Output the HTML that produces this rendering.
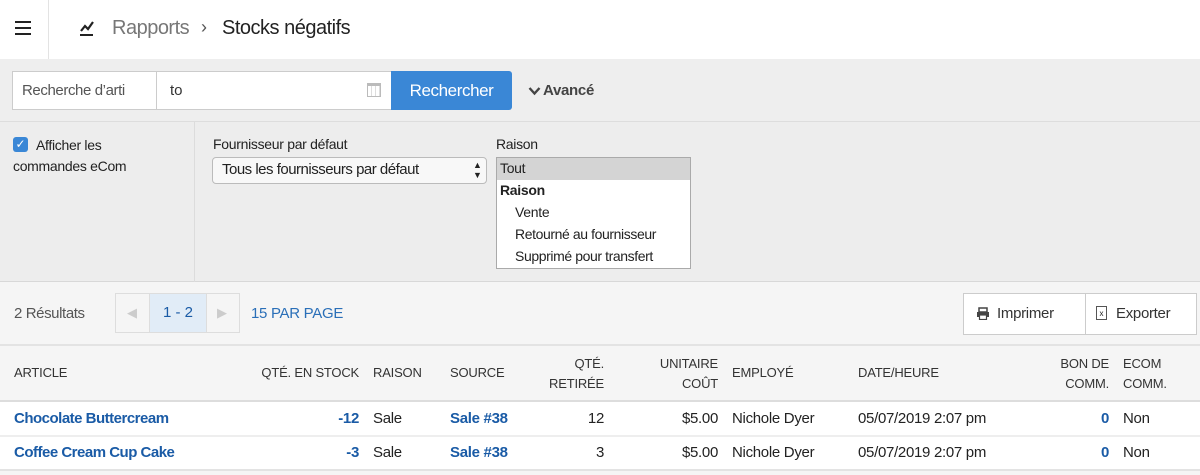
<!DOCTYPE html>
<html><head><meta charset="utf-8"><style>
*{box-sizing:border-box;margin:0;padding:0}
body{width:1200px;height:475px;position:relative;overflow:hidden;background:#f5f5f5;font-family:"Liberation Sans",sans-serif;color:#222}
.a{position:absolute;white-space:nowrap}
.lnk{color:#1a5ba6}
.th{font-size:13px;color:#333;letter-spacing:-0.2px}
.td{font-size:15px;letter-spacing:-0.3px}
.r{text-align:right}
</style></head><body>
<div class="a" style="left:0;top:0;width:1200px;height:59px;background:#fff;box-shadow:0 2px 3px rgba(0,0,0,.15)"></div>
<div class="a" style="left:48px;top:0;width:1px;height:59px;background:#e3e3e3"></div>
<div class="a" style="left:15px;top:21px;width:16px;height:2px;background:#222;box-shadow:0 6px 0 #222,0 12px 0 #222"></div>
<svg class="a" style="left:79px;top:19px" width="18" height="18" viewBox="0 0 18 18"><path d="M2 12 L6 7 L9 10 L14 3" stroke="#222" stroke-width="2.2" fill="none"/><rect x="1" y="15" width="13" height="2" fill="#222"/></svg>
<div class="a" style="left:112px;top:17px;font-size:20px;color:#777;letter-spacing:-0.5px">Rapports</div>
<div class="a" style="left:201px;top:17px;font-size:18px;color:#555">›</div>
<div class="a" style="left:222px;top:17px;font-size:20px;color:#222;letter-spacing:-0.5px">Stocks négatifs</div>
<div class="a" style="left:0;top:59px;width:1200px;height:63px;background:#eee;border-bottom:1px solid #ddd"></div>
<div class="a" style="left:12px;top:71px;width:380px;height:39px;background:#fff;border:1px solid #ccc"></div>
<div class="a" style="left:156px;top:71px;width:1px;height:39px;background:#ccc"></div>
<div class="a" style="left:22px;top:82px;font-size:15px;color:#555;letter-spacing:-0.4px;width:126px;overflow:hidden">Recherche d’arti</div>
<div class="a" style="left:170px;top:82px;font-size:15px;color:#333">to</div>
<div class="a" style="left:367px;top:83px;width:14px;height:14px;border:1px solid #bbb;border-top:3px solid #bbb;background:repeating-linear-gradient(90deg,#fff 0 3px,#ddd 3px 4px)"></div>
<div class="a" style="left:391px;top:71px;width:121px;height:39px;background:#3a87d6;border-radius:0 3px 3px 0;color:#fff;font-size:17px;text-align:center;line-height:39px;letter-spacing:-0.4px">Rechercher</div>
<svg class="a" style="left:528px;top:86px" width="13" height="10" viewBox="0 0 13 10"><path d="M1.5 2 L6.5 7.5 L11.5 2" stroke="#444" stroke-width="2.4" fill="none"/></svg>
<div class="a" style="left:543px;top:82px;font-size:15px;font-weight:bold;color:#444;letter-spacing:-0.3px">Avancé</div>
<div class="a" style="left:0;top:122px;width:1200px;height:160px;background:#ededed;border-bottom:1px solid #d8d8d8"></div>
<div class="a" style="left:194px;top:122px;width:1px;height:160px;background:#dcdcdc"></div>
<div class="a" style="left:13px;top:137px;width:15px;height:15px;background:#3a87d6;border-radius:3px;color:#fff;font-size:12px;line-height:15px;text-align:center">✓</div>
<div class="a" style="left:36px;top:137px;font-size:14px;letter-spacing:-0.3px">Afficher les</div>
<div class="a" style="left:13px;top:158px;font-size:14px;letter-spacing:-0.3px">commandes eCom</div>
<div class="a" style="left:213px;top:136px;font-size:14px;letter-spacing:-0.3px">Fournisseur par défaut</div>
<div class="a" style="left:212px;top:157px;width:275px;height:27px;background:#f8f8f8;border:1px solid #bbb;border-radius:4px"></div>
<div class="a" style="left:222px;top:161px;font-size:15px;letter-spacing:-0.5px">Tous les fournisseurs par défaut</div>
<div class="a" style="left:473px;top:160px;font-size:9px;line-height:10px">▲<br>▼</div>
<div class="a" style="left:496px;top:136px;font-size:14px;letter-spacing:-0.3px">Raison</div>
<div class="a" style="left:496px;top:157px;width:195px;height:112px;background:#fff;border:1px solid #aaa"></div>
<div class="a" style="left:497px;top:158px;width:193px;height:22px;background:#d4d4d4"></div>
<div class="a" style="left:500px;top:160px;font-size:14px;letter-spacing:-0.3px">Tout</div>
<div class="a" style="left:500px;top:182px;font-size:14px;font-weight:bold;letter-spacing:-0.3px">Raison</div>
<div class="a" style="left:515px;top:204px;font-size:14px;letter-spacing:-0.3px">Vente</div>
<div class="a" style="left:515px;top:226px;font-size:14px;letter-spacing:-0.4px">Retourné au fournisseur</div>
<div class="a" style="left:515px;top:248px;font-size:14px;letter-spacing:-0.4px">Supprimé pour transfert</div>
<div class="a" style="left:14px;top:305px;font-size:15px;color:#555;letter-spacing:-0.4px">2 Résultats</div>
<div class="a" style="left:115px;top:293px;width:125px;height:40px;border:1px solid #ddd;background:#f5f5f5"></div>
<div class="a" style="left:149px;top:294px;width:58px;height:38px;background:#e1ecf7;border-left:1px solid #ddd;border-right:1px solid #ddd;color:#1a5ba6;font-size:15px;text-align:center;line-height:38px">1 - 2</div>
<div class="a" style="left:127px;top:305px;font-size:13px;color:#ccc">◀</div>
<div class="a" style="left:217px;top:305px;font-size:13px;color:#ccc">▶</div>
<div class="a lnk" style="left:251px;top:305px;font-size:15px;letter-spacing:-0.3px;color:#2a6fb8">15 PAR PAGE</div>
<div class="a" style="left:963px;top:293px;width:234px;height:42px;background:#fff;border:1px solid #ccc"></div>
<div class="a" style="left:1085px;top:293px;width:1px;height:42px;background:#ccc"></div>
<svg class="a" style="left:976px;top:307px" width="14" height="13" viewBox="0 0 14 13"><rect x="3" y="1" width="8" height="4" fill="none" stroke="#444" stroke-width="1.5"/><rect x="1" y="5" width="12" height="5" fill="#444"/><rect x="3.5" y="8" width="7" height="4.5" fill="#fff" stroke="#444" stroke-width="1.2"/></svg>
<div class="a" style="left:997px;top:305px;font-size:15px;color:#333;letter-spacing:-0.3px">Imprimer</div>
<div class="a" style="left:1096px;top:306px;width:11px;height:14px;border:1px solid #555;font-size:8px;text-align:center;line-height:13px">x</div>
<div class="a" style="left:1116px;top:305px;font-size:15px;color:#333;letter-spacing:-0.3px">Exporter</div>
<div class="a" style="left:0;top:344px;width:1200px;height:2px;background:#e3e3e3"></div>
<div class="a" style="left:0;top:400px;width:1200px;height:70px;background:#fff;border-top:2px solid #ddd"></div>
<div class="a" style="left:0;top:435px;width:1200px;height:2px;background:#eee"></div>
<div class="a" style="left:0;top:469px;width:1200px;height:2px;background:#e3e3e3"></div>
<div class="a th" style="left:14px;top:365px">ARTICLE</div>
<div class="a th r" style="right:841px;top:365px">QTÉ. EN STOCK</div>
<div class="a th" style="left:373px;top:365px">RAISON</div>
<div class="a th" style="left:450px;top:365px">SOURCE</div>
<div class="a th r" style="right:596px;top:354px;line-height:20px">QTÉ.<br>RETIRÉE</div>
<div class="a th r" style="right:482px;top:354px;line-height:20px">UNITAIRE<br>COÛT</div>
<div class="a th" style="left:732px;top:365px">EMPLOYÉ</div>
<div class="a th" style="left:858px;top:365px">DATE/HEURE</div>
<div class="a th r" style="right:91px;top:354px;line-height:20px">BON DE<br>COMM.</div>
<div class="a th" style="left:1123px;top:354px;line-height:20px">ECOM<br>COMM.</div>
<div class="a td lnk" style="left:14px;top:410px;font-weight:bold;letter-spacing:-0.5px">Chocolate Buttercream</div>
<div class="a td lnk r" style="right:841px;top:410px;font-weight:bold">-12</div>
<div class="a td" style="left:373px;top:410px">Sale</div>
<div class="a td lnk" style="left:450px;top:410px;font-weight:bold">Sale #38</div>
<div class="a td r" style="right:596px;top:410px">12</div>
<div class="a td r" style="right:482px;top:410px">$5.00</div>
<div class="a td" style="left:732px;top:410px">Nichole Dyer</div>
<div class="a td" style="left:858px;top:410px">05/07/2019 2:07 pm</div>
<div class="a td lnk r" style="right:91px;top:410px;font-weight:bold">0</div>
<div class="a td" style="left:1123px;top:410px">Non</div>
<div class="a td lnk" style="left:14px;top:444px;font-weight:bold;letter-spacing:-0.5px">Coffee Cream Cup Cake</div>
<div class="a td lnk r" style="right:841px;top:444px;font-weight:bold">-3</div>
<div class="a td" style="left:373px;top:444px">Sale</div>
<div class="a td lnk" style="left:450px;top:444px;font-weight:bold">Sale #38</div>
<div class="a td r" style="right:596px;top:444px">3</div>
<div class="a td r" style="right:482px;top:444px">$5.00</div>
<div class="a td" style="left:732px;top:444px">Nichole Dyer</div>
<div class="a td" style="left:858px;top:444px">05/07/2019 2:07 pm</div>
<div class="a td lnk r" style="right:91px;top:444px;font-weight:bold">0</div>
<div class="a td" style="left:1123px;top:444px">Non</div>
</body></html>
